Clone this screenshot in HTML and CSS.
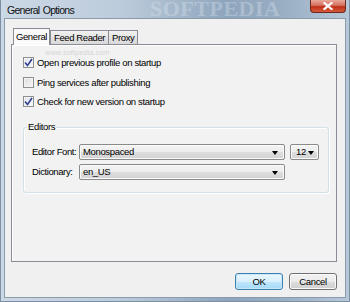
FILE: index.html
```html
<!DOCTYPE html>
<html>
<head>
<meta charset="utf-8">
<link rel="stylesheet" href="styles.css">
</head>
<body>
<div class="window">
  <div class="titlebar">
    <span class="title">General Options</span>
    <span class="watermark">SOFTPEDIA</span>
    <div class="close">
      <svg width="10" height="8" viewBox="0 0 10 8"><path d="M1.5 1 L8.5 7 M8.5 1 L1.5 7" stroke="#fff" stroke-width="2.2" stroke-linecap="square"/></svg>
    </div>
  </div>
  <div class="client">
    <div class="tabs">
      <div class="tab active">General</div>
      <div class="tab">Feed Reader</div>
      <div class="tab">Proxy</div>
    </div>
    <div class="panel">
      <span class="url">www.softpedia.com</span>
      <label class="check"><span class="box on"><svg width="9" height="9" viewBox="0 0 9 9"><path d="M1 4.5 L3.5 7.5 L8 1" fill="none" stroke="#30408a" stroke-width="1.6"/></svg></span>Open previous profile on startup</label>
      <label class="check"><span class="box"></span>Ping services after publishing</label>
      <label class="check"><span class="box on"><svg width="9" height="9" viewBox="0 0 9 9"><path d="M1 4.5 L3.5 7.5 L8 1" fill="none" stroke="#30408a" stroke-width="1.6"/></svg></span>Check for new version on startup</label>
      <div class="group">
        <span class="legend">Editors</span>
        <div class="row">
          <span class="lbl">Editor Font:</span>
          <div class="combo wide"><span>Monospaced</span><i class="arrow"></i></div>
          <div class="combo small"><span>12</span><i class="arrow"></i></div>
        </div>
        <div class="row">
          <span class="lbl">Dictionary:</span>
          <div class="combo wide"><span>en_US</span><i class="arrow"></i></div>
        </div>
      </div>
    </div>
    <div class="buttons">
      <button class="btn default">OK</button>
      <button class="btn">Cancel</button>
    </div>
  </div>
</div>
</body>
</html>
```

FILE: styles.css
```css
html, body {
  margin: 0;
  padding: 0;
  width: 350px;
  height: 302px;
  overflow: hidden;
  font-family: "Liberation Sans", sans-serif;
}

.window {
  width: 350px;
  height: 302px;
  box-sizing: border-box;
  padding: 0 3px 4px 3px;
  background: linear-gradient(90deg, #cbd8e6 0%, #bccbdb 35%, #8ea5bc 65%, #98adc2 80%, #b7c8d9 100%);
  border: 1px solid #7d8fa3;
  border-top: none;
  display: flex;
  flex-direction: column;
  overflow: hidden;
}

.titlebar {
  height: 18px;
  flex: none;
  display: flex;
  align-items: center;
  position: relative;
}

.title {
  font-family: "Liberation Sans", sans-serif;
  font-size: 10.5px;
  color: #111;
  padding-left: 3px;
  padding-top: 2px;
  letter-spacing: -0.7px;
  word-spacing: 1px;
}

.watermark {
  position: absolute;
  left: 146px;
  top: 0;
  font-family: "Liberation Serif", serif;
  font-weight: bold;
  font-size: 22px;
  line-height: 18px;
  letter-spacing: 0.5px;
  color: rgba(235, 242, 250, 0.3);
  white-space: nowrap;
}

.close {
  position: absolute;
  right: 0;
  top: 0;
  width: 36px;
  height: 13px;
  border: 1px solid #6a2a22;
  border-top: none;
  border-radius: 0 0 4px 4px;
  background: linear-gradient(#e9a99b 0%, #d3705d 45%, #c1301a 55%, #d45a3a 100%);
  display: flex;
  align-items: center;
  justify-content: center;
  box-sizing: border-box;
}

.client {
  height: 280px;
  flex: none;
  box-sizing: border-box;
  background: #f0f0f0;
  border: 1px solid #8a9bac;
  display: flex;
  flex-direction: column;
  padding: 9px 8px 0 6px;
}

.tabs {
  display: flex;
  align-items: flex-end;
  height: 16px;
  flex: none;
  padding-left: 2px;
  position: relative;
  z-index: 1;
}

.tab {
  font-size: 9.5px;
  letter-spacing: -0.4px;
  color: #000;
  height: 13px;
  line-height: 14px;
  padding: 0 3px 0 3px;
  border: 1px solid #898c95;
  border-bottom: none;
  margin-left: -1px;
  background: linear-gradient(#f2f2f2, #e3e3e3 50%, #d9d9d9);
}

.tab.active {
  height: 15px;
  line-height: 15px;
  background: #fafafa;
  margin-bottom: -1px;
  padding: 0 2px 1px 2px;
  position: relative;
  z-index: 2;
  margin-left: 0;
  margin-right: 1px;
}

.panel {
  height: 218px;
  flex: none;
  border: 1px solid #898c95;
  background: #f2f2f2;
  box-shadow: inset 1px 1px 0 #fff;
  padding: 8px 9px 0 11px;
  position: relative;
  box-sizing: border-box;
}

.url {
  position: absolute;
  left: 33px;
  top: 4px;
  font-size: 7.5px;
  line-height: 8px;
  color: rgba(150, 150, 150, 0.35);
}

.check {
  display: flex;
  align-items: center;
  height: 19.5px;
  font-size: 9.5px;
  letter-spacing: -0.35px;
  color: #000;
}

.box {
  width: 9px;
  height: 9px;
  flex: none;
  border: 1px solid #8e8f8f;
  background: linear-gradient(135deg, #dcdcdc, #f6f6f6);
  box-shadow: inset 0 0 0 1px #f4f4f4;
  margin-right: 3px;
  display: flex;
  align-items: center;
  justify-content: center;
}

.box.on {
  background: linear-gradient(135deg, #dde3f0, #f7f9fc);
}

.group {
  margin: 15px 0 0 0;
  padding: 12px 0 0 8px;
  width: 306px;
  height: 66px;
  box-sizing: border-box;
  border: 1px solid #d5dfe5;
  border-radius: 3px;
  box-shadow: inset 1px 1px 0 #fff, 1px 1px 0 #fff;
  position: relative;
}

.legend {
  position: absolute;
  left: 3px;
  top: -7px;
  font-size: 9.5px;
  letter-spacing: -0.35px;
  padding: 0 1px;
  background: #f2f2f2;
  color: #000;
}

.row {
  display: flex;
  align-items: center;
  height: 16px;
  margin-top: 4px;
}

.lbl {
  width: 47px;
  flex: none;
  font-size: 9.5px;
  letter-spacing: -0.4px;
  color: #000;
}

.combo {
  height: 16px;
  flex: none;
  box-sizing: border-box;
  border: 1px solid #8a8a8a;
  border-radius: 2px;
  background: linear-gradient(#f4f4f4 0%, #ececec 50%, #dedede 51%, #d2d2d2 100%);
  box-shadow: inset 0 0 0 1px #fbfbfb;
  display: flex;
  align-items: center;
  font-size: 9.5px;
  letter-spacing: -0.35px;
  color: #000;
  padding: 0 6px 0 3px;
}

.combo span { flex: 1; }

.combo.wide { width: 206px; }
.combo.small { width: 29px; margin-left: 5px; padding: 0 4px 0 5px; }

.arrow {
  width: 0;
  height: 0;
  border-left: 3px solid transparent;
  border-right: 3px solid transparent;
  border-top: 4px solid #000;
  margin-top: 2px;
}

.buttons {
  display: flex;
  justify-content: flex-end;
  gap: 6px;
  margin-top: 11px;
}

.btn {
  width: 48px;
  height: 17px;
  font-family: "Liberation Sans", sans-serif;
  font-size: 9.5px;
  letter-spacing: -0.35px;
  color: #000;
  border: 1px solid #707070;
  border-radius: 3px;
  background: linear-gradient(#f2f2f2 0%, #ebebeb 50%, #dddddd 51%, #cfcfcf 100%);
  box-shadow: inset 0 0 0 1px #fafafa;
  padding: 0;
}

.btn.default {
  border-color: #3c7fb1;
  background: linear-gradient(#eaf6fd 0%, #d9f0fc 50%, #bee6fd 51%, #a7d9f5 100%);
  box-shadow: inset 0 0 0 1px #c8e8f8;
}
```
